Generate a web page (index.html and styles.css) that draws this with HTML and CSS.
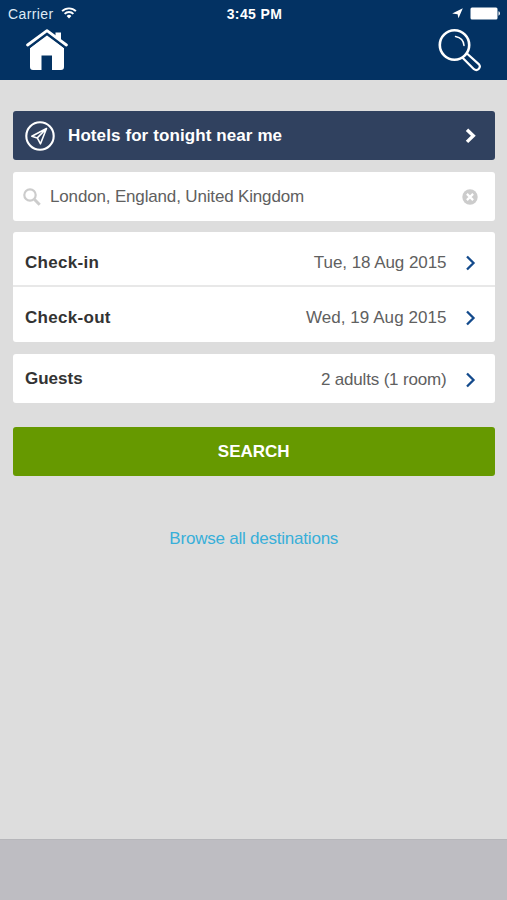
FILE: index.html
```html
<!DOCTYPE html>
<html lang="en">
<head>
<meta charset="utf-8">
<title>Hotel search</title>
<link rel="stylesheet" href="styles.css">
</head>
<body>
<header class="header">
  <div class="status">
    <div class="status-left">
      <span class="carrier">Carrier</span>
      <svg class="wifi" width="16" height="12" viewBox="0 0 16 12" fill="none" stroke="#fff" stroke-width="1.9"><path d="M1.1 4.2a9.8 9.8 0 0 1 13.8 0M3.6 6.9a6.2 6.2 0 0 1 8.800 0"/><path d="M8 11.4 5.6 9a3.5 3.5 0 0 1 4.8 0z" fill="#fff" stroke="none"/></svg>
    </div>
    <span class="time">3:45 PM</span>
    <div class="status-right">
      <svg class="location" width="11" height="11" viewBox="0 0 11 11"><path d="M10.800.3 6.500 10.200 5.600 6.200.2 5.400z" fill="#fff"/></svg>
      <svg class="battery" width="31" height="13" viewBox="0 0 31 13"><rect x=".5" y=".5" width="27" height="12" rx="1.5" fill="#fff"/><path d="M28.500 4.300c1.900.4 1.900 4 0 4.400z" fill="#fff"/></svg>
    </div>
  </div>
  <nav class="nav">
    <svg width="42" height="42" viewBox="0 0 42 42"><path d="M4 19 21 5.500 38 19v19q0 3-3 3H26V26.500H15.500V41H7q-3 0-3-3z" fill="#fff"/><path d="M1.600 17.300 21 3 40.400 17.300" fill="none" stroke="#033263" stroke-width="5.600" stroke-linecap="round" stroke-linejoin="round"/><path d="M1.600 16 21 1.700 40.400 16" fill="none" stroke="#fff" stroke-width="2.800" stroke-linecap="round" stroke-linejoin="round"/><path d="M29.500 3.500H35v8.500l-5.500-4z" fill="#fff"/></svg>
    <svg width="44" height="43" viewBox="0 0 44 43" fill="none" stroke="#fff" stroke-linecap="round" stroke-linejoin="round"><circle cx="16.500" cy="16" r="14.700" stroke-width="2.600"/><path d="M17.500 7.500Q25.500 9 26 16.500" stroke-width="1.500"/><path d="M24.800 29 36 40.200c3.300 2.400 7.500-1.500 5-4.800L29.500 25" stroke-width="2.200"/></svg>
  </nav>
</header>
<main class="content">
  <a class="card nearby">
    <svg class="compass" width="30" height="30" viewBox="0 0 30 30" fill="none" stroke="#fff"><circle cx="15" cy="15" r="13.700" stroke-width="2.100"/><path d="M21.500 7.500 6.800 15.200l5.500 1.700L15.500 22.800zM12.300 16.900l9.200-9.400" stroke-width="1.600" stroke-linejoin="round"/></svg>
    <span class="nearby-text">Hotels for tonight near me</span>
    <svg class="chevron" width="12" height="16" viewBox="0 0 12 16"><path d="m2 1.700 6.300 6.100L2 13.900" fill="none" stroke="#fff" stroke-width="3.400"/></svg>
  </a>
  <div class="card destination">
    <svg width="18" height="18" viewBox="0 0 18 18" fill="none" stroke="#ccc"><circle cx="7" cy="7" r="5.700" stroke-width="2.200"/><path d="m11.500 11.500 5.200 5.200" stroke-width="3"/></svg>
    <span class="destination-text">London, England, United Kingdom</span>
    <svg class="clear" width="16" height="16" viewBox="0 0 16 16"><circle cx="8" cy="8" r="7.700" fill="#ccc"/><path d="m4.900 4.900 6.200 6.200m0-6.200-6.200 6.200" stroke="#fff" stroke-width="2.200"/></svg>
  </div>
  <div class="card dates">
    <div class="row check-in">
      <span class="label">Check-in</span><span class="value v-in">Tue, 18 Aug 2015</span>
      <svg class="chevron" width="12" height="16" viewBox="0 0 12 16"><path d="m2 1.500 6.500 6.500L2 14.500" fill="none" stroke="#134a8c" stroke-width="2.300"/></svg>
    </div>
    <div class="row check-out">
      <span class="label">Check-out</span><span class="value v-out">Wed, 19 Aug 2015</span>
      <svg class="chevron" width="12" height="16" viewBox="0 0 12 16"><path d="m2 1.500 6.500 6.500L2 14.500" fill="none" stroke="#134a8c" stroke-width="2.300"/></svg>
    </div>
  </div>
  <div class="card row guests">
    <span class="label guests-label">Guests</span><span class="value v-guests">2 adults (1 room)</span>
    <svg class="chevron" width="12" height="16" viewBox="0 0 12 16"><path d="m2 1.500 6.500 6.500L2 14.500" fill="none" stroke="#134a8c" stroke-width="2.300"/></svg>
  </div>
  <button class="search" type="button">SEARCH</button>
  <a class="browse">Browse all destinations</a>
</main>
<footer class="footer"></footer>
</body>
</html>
```
FILE: styles.css
```css
* { box-sizing: border-box; }
body {
  margin: 0;
  height: 900px;
  display: flex;
  flex-direction: column;
  overflow: hidden;
  background: #ddd;
  color: #606060;
  font: 17px/20px "Liberation Sans", Arial, sans-serif;
}
svg { display: block; flex: none; }
.header { height: 80px; background: #033263; color: #fff; }
.status {
  height: 28px;
  padding: 0 6px 0 8px;
  display: grid;
  grid-template-columns: 1fr auto 1fr;
  align-items: center;
  font-size: 14px;
}
.status-left, .status-right { display: flex; align-items: center; }
.status-left { gap: 7px; color: #dfeaf5; letter-spacing: .4px; }
.wifi { margin-top: -2px; }
.status-right { justify-content: flex-end; gap: 7px; }
.location, .battery { margin-top: -2px; }
.time { font-size: 14px; font-weight: 700; letter-spacing: .4px; }
.nav { display: flex; justify-content: space-between; padding: 1px 25px 0 26px; }
.content { flex: 1; padding: 31px 12.500px 0 13px; display: flex; flex-direction: column; }
.card { background: #fff; border-radius: 3px; flex: none; }
.nearby {
  height: 49px;
  padding: 0 18px 0 12px;
  display: flex;
  align-items: center;
  background: #30415f;
  color: #fff;
  font-weight: 700;
}
.nearby-text { margin-left: 13px; letter-spacing: .1px; }
.chevron { margin-left: auto; }
.destination {
  height: 49px;
  margin-top: 12px;
  padding: 0 16.500px 0 10px;
  display: flex;
  align-items: center;
}
.destination-text { margin-left: 9px; letter-spacing: -.16px; }
.clear { margin-left: auto; }
.dates { height: 110px; margin-top: 11px; }
.row { display: flex; align-items: center; padding: 0 18px 0 12px; }
.check-in { height: 55px; padding-top: 8px; border-bottom: 2px solid #e8e8e8; }
.check-out { height: 55px; padding-top: 6px; }
.label { color: #333; font-weight: 700; letter-spacing: .3px; }
.guests-label { letter-spacing: 0; margin-top: -2px; }
.value { margin-left: auto; }
.v-in { letter-spacing: -.06px; }
.v-out { letter-spacing: .06px; }
.v-guests { letter-spacing: -.17px; }
.row .chevron { margin-left: 18px; }
.guests { height: 49px; margin-top: 12px; padding-top: 3px; }
.search {
  height: 49px;
  margin-top: 24px;
  flex: none;
  border: 0;
  border-radius: 3px;
  background: #690;
  color: #fff;
  font: 700 17px/20px "Liberation Sans", Arial, sans-serif;
}
.browse { margin-top: 53px; align-self: center; color: #38afd9; letter-spacing: -.22px; }
.footer { height: 61px; background: #bebdc2; border-top: 1px solid #b6b6ba; flex: none; }
```
